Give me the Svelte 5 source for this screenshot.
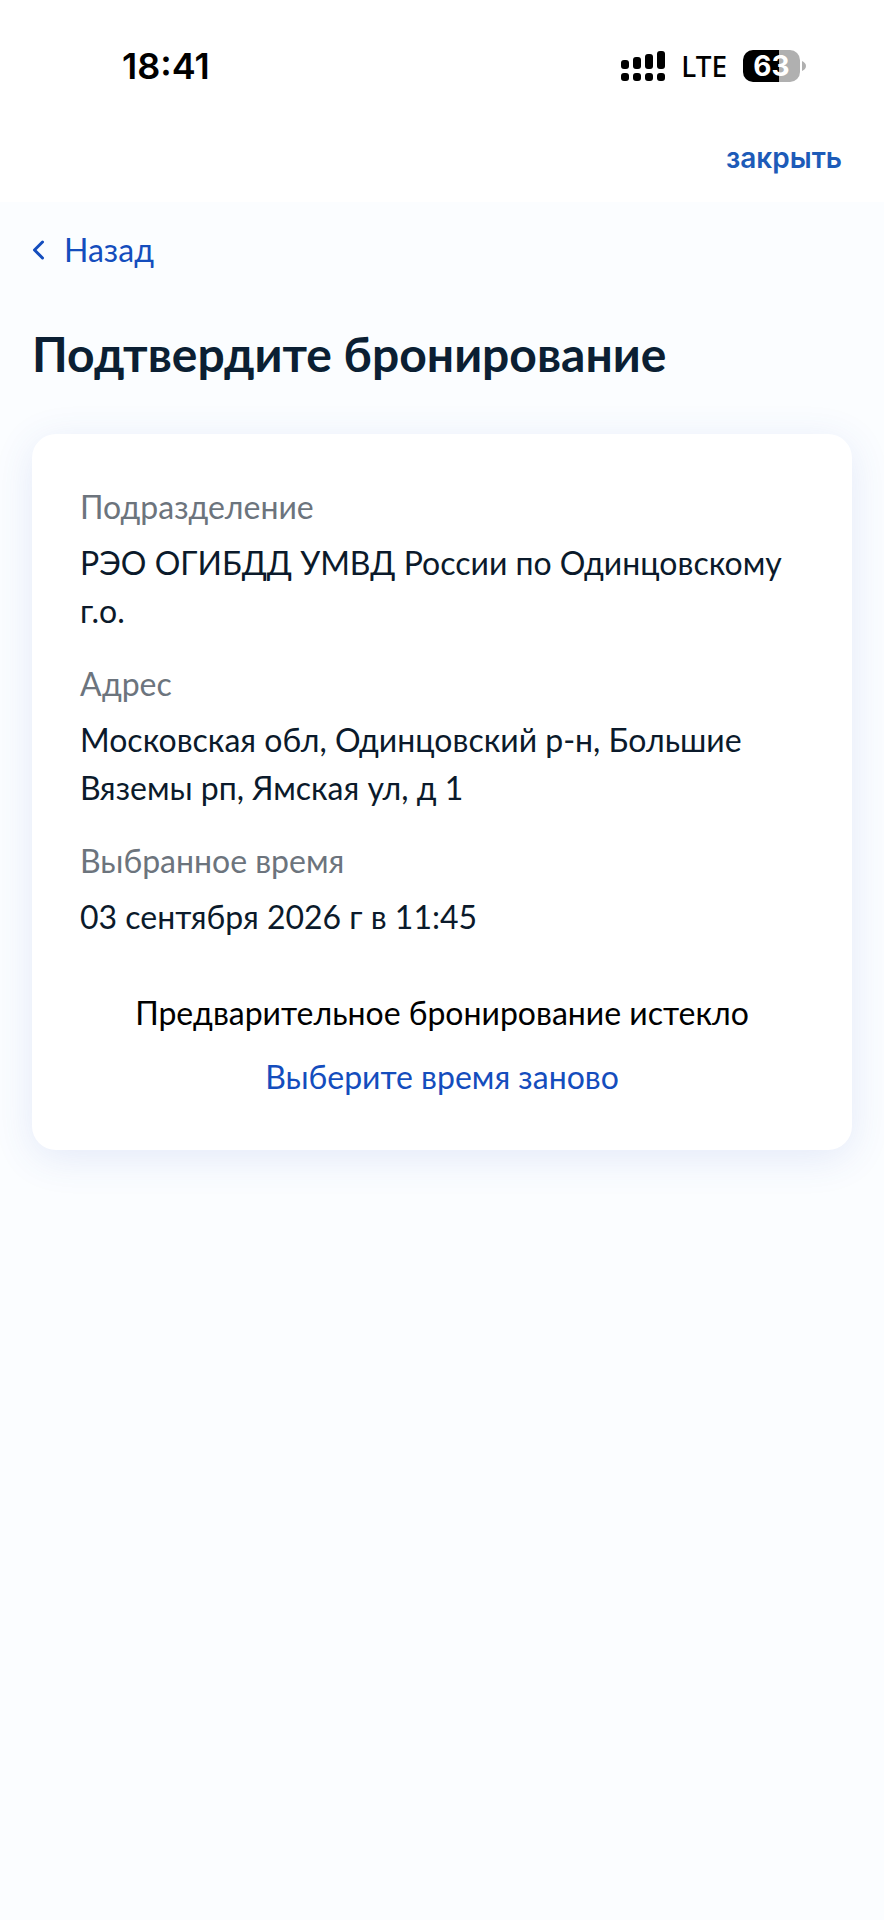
<script lang="ts">
    const time = '18:41';
    const network = 'LTE';
    const battery = 63;

    const details = [
        { label: 'Подразделение', value: 'РЭО ОГИБДД УМВД России по Одинцовскому г.о.' },
        { label: 'Адрес', value: 'Московская обл, Одинцовский р-н, Большие Вяземы рп, Ямская ул, д 1' },
        { label: 'Выбранное время', value: '03 сентября 2026 г в 11:45' }
    ];
</script>

<div class="screen">
    <header>
        <div class="status">
            <span class="time">{time}</span>
            <div class="indicators">
                <svg class="signal" viewBox="0 0 44 32" aria-hidden="true">
                    <rect x="0" y="10" width="8" height="9" rx="3"/>
                    <rect x="12" y="7" width="8" height="12" rx="3"/>
                    <rect x="24" y="4" width="8" height="15" rx="3"/>
                    <rect x="36" y="1" width="8" height="18" rx="3"/>
                    <rect x="0" y="23" width="8" height="8" rx="3"/>
                    <rect x="12" y="23" width="8" height="8" rx="3"/>
                    <rect x="24" y="23" width="8" height="8" rx="3"/>
                    <rect x="36" y="23" width="8" height="8" rx="3"/>
                </svg>
                <span class="network">{network}</span>
                <div class="battery">
                    <div class="cell" style="--charge: {battery}%">{battery}</div>
                    <svg class="tip" viewBox="0 0 4 10" aria-hidden="true">
                        <path d="M0 0C2.5 1 4 3 4 5S2.5 9 0 10Z"/>
                    </svg>
                </div>
            </div>
        </div>
        <div class="toolbar">
            <button class="close" type="button">закрыть</button>
        </div>
    </header>

    <main>
        <a class="back" href="#back">
            <svg viewBox="0 0 14 22" aria-hidden="true">
                <path d="M10.5 3L2.5 11L10.5 19"/>
            </svg>
            Назад
        </a>

        <h1>Подтвердите бронирование</h1>

        <section class="card">
            <dl>
                {#each details as item}
                    <div class="item">
                        <dt>{item.label}</dt>
                        <dd>{item.value}</dd>
                    </div>
                {/each}
            </dl>
            <div class="expired">
                <p>Предварительное бронирование истекло</p>
                <a href="#time">Выберите время заново</a>
            </div>
        </section>
    </main>
</div>

<style>
    :global(body) {
        background: #fbfdff;
    }

    .screen {
        min-height: 100vh;
        background: #fbfdff;
        color: #0b1a2b;
        font-family: Lato, sans-serif;
        font-size: 32px;
        line-height: 48px;
    }

    header {
        padding: 42px 42px 20px;
        background: #fff;
        font-family: Inter, sans-serif;
    }

    .status {
        display: flex;
        align-items: center;
        justify-content: space-between;
        height: 48px;
        padding: 0 36px 0 80px;
        color: #000;
    }

    .time {
        font-size: 36px;
        font-weight: 600;
    }

    .indicators {
        display: flex;
        align-items: center;
        gap: 16px;
    }

    .signal {
        width: 44px;
        height: 32px;
    }

    .network {
        font-family: "Noto Sans", sans-serif;
        font-size: 28px;
        font-weight: 500;
    }

    .battery {
        display: flex;
        align-items: center;
        gap: 2px;
    }

    .cell {
        width: 57px;
        border-radius: 10px;
        background: linear-gradient(to right, #000 var(--charge), #b0b0b0 var(--charge));
        color: #fff;
        font-size: 28px;
        font-weight: 700;
        line-height: 32px;
        text-align: center;
    }

    .tip {
        width: 4px;
        height: 10px;
        fill: #b0b0b0;
    }

    .toolbar {
        display: flex;
        justify-content: flex-end;
        padding-top: 44px;
    }

    .close {
        padding: 0;
        border: none;
        background: none;
        color: #1d5bb8;
        font-family: inherit;
        font-size: 28px;
        font-weight: 600;
        line-height: 48px;
        cursor: pointer;
    }

    main {
        padding: 24px 32px;
    }

    a {
        color: #144dbd;
        text-decoration: none;
    }

    .back {
        display: inline-flex;
        align-items: center;
        gap: 18px;
        vertical-align: top;
    }

    .back svg {
        width: 14px;
        height: 22px;
        fill: none;
        stroke: currentColor;
        stroke-width: 3;
        stroke-linecap: round;
        stroke-linejoin: round;
    }

    h1 {
        margin: 48px 0;
        color: #0b1f33;
        font-size: 48px;
        font-weight: 700;
        line-height: 64px;
    }

    .card {
        padding: 49px 48px;
        border-radius: 24px;
        background: #fff;
        box-shadow: 0 8px 40px rgba(60, 90, 200, 0.12);
    }

    dl {
        display: flex;
        flex-direction: column;
        gap: 25px;
        margin: 0;
    }

    dt {
        margin-bottom: 8px;
        color: #6c747d;
    }

    dd {
        margin: 0;
    }

    .expired {
        display: flex;
        flex-direction: column;
        align-items: center;
        gap: 16px;
        margin-top: 48px;
    }

    p {
        margin: 0;
        color: #000;
    }
</style>
